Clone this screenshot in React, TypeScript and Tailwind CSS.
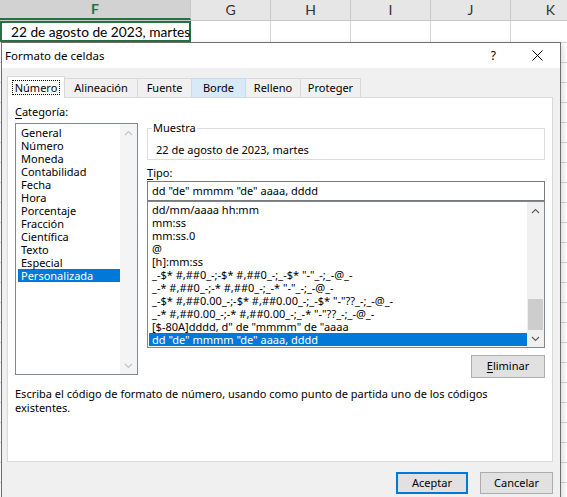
import React from 'react';

const catItems = [
  'General',
  'Número',
  'Moneda',
  'Contabilidad',
  'Fecha',
  'Hora',
  'Porcentaje',
  'Fracción',
  'Científica',
  'Texto',
  'Especial',
  'Personalizada',
];

const tipoItems = [
  'dd/mm/aaaa hh:mm',
  'mm:ss',
  'mm:ss.0',
  '@',
  '[h]:mm:ss',
  '_-$* #,##0_-;-$* #,##0_-;_-$* "-"_-;_-@_-',
  '_-* #,##0_-;-* #,##0_-;_-* "-"_-;_-@_-',
  '_-$* #,##0.00_-;-$* #,##0.00_-;_-$* "-"??_-;_-@_-',
  '_-* #,##0.00_-;-* #,##0.00_-;_-* "-"??_-;_-@_-',
  '[$-80A]dddd, d" de "mmmm" de "aaaa',
  'dd "de" mmmm "de" aaaa, dddd',
];

function Chevron({ up, color }: { up: boolean; color: string }) {
  return (
    <svg width="9" height="6" viewBox="0 0 9 6">
      <path
        d={up ? 'M1 5 L4.5 1.5 L8 5' : 'M1 1 L4.5 4.5 L8 1'}
        fill="none"
        stroke={color}
        strokeWidth="1.2"
      />
    </svg>
  );
}

const cols = ['G', 'H', 'I', 'J', 'K'];

export default function App() {
  return (
    <div className="relative w-[567px] h-[497px] overflow-hidden bg-white font-['Lato',sans-serif]">
      {/* Column headers */}
      <div className="flex h-[21px] bg-[#e6e6e6] border-b border-[#c8c8c8]">
        <div className="w-[191px] shrink-0 bg-[#d2d2d2] border-r border-[#c8c8c8] border-b-2 border-b-[#217346] flex items-center justify-center text-[14px] font-bold text-[#217346] leading-none">
          F
        </div>
        {cols.map((c) => (
          <div
            key={c}
            className="w-[80px] shrink-0 border-r border-[#c8c8c8] flex items-center justify-center text-[14px] text-[#333] leading-none"
          >
            {c}
          </div>
        ))}
        <div className="flex-1" />
      </div>
      {/* Row 1 */}
      <div className="flex h-[22px] border-b border-[#d4d4d4]">
        <div className="w-[191px] shrink-0 border-2 border-[#217346] flex items-end pl-[9px] text-[13.7px] text-black leading-[17px] whitespace-nowrap">
          22 de agosto de 2023, martes
        </div>
        {cols.map((c) => (
          <div key={c} className="w-[80px] shrink-0 border-r border-[#d4d4d4]" />
        ))}
      </div>
      {/* Remaining rows */}
      {Array.from({ length: 23 }).map((_, i) => (
        <div key={i} className="flex h-[20px] border-b border-[#d4d4d4]">
          <div className="w-[191px] shrink-0 border-r border-[#d4d4d4]" />
          {cols.map((c) => (
            <div key={c} className="w-[80px] shrink-0 border-r border-[#d4d4d4]" />
          ))}
        </div>
      ))}

      {/* Dialog */}
      <div className="absolute left-[1px] top-[42px] w-[560px] h-[470px] border border-[#6f6f6f] bg-[#f0f0f0] flex flex-col font-['Noto_Sans',sans-serif] text-[11px] text-black shadow-[2px_2px_6px_rgba(0,0,0,0.15)]">
        {/* Title bar */}
        <div className="h-[25px] bg-white flex items-center pl-[3px] shrink-0">
          <span className="text-[11.5px] leading-none">Formato de celdas</span>
          <span className="ml-auto text-[12px] leading-none mr-[36px]">?</span>
          <svg width="11" height="11" viewBox="0 0 11 11" className="mr-[17px]">
            <path d="M0.5 0.5 L10.5 10.5 M10.5 0.5 L0.5 10.5" stroke="#000" strokeWidth="1" />
          </svg>
        </div>

        <div className="pt-[8px] pl-[5px]">
          {/* Tabs */}
          <div className="flex items-end h-[22px]">
            <div className="relative z-10 w-[58px] h-[22px] bg-white border border-b-0 border-[#d9d9d9] flex items-center justify-center">
              <span className="outline outline-1 outline-dotted outline-black px-[2px] leading-[13px]">
                Número
              </span>
            </div>
            <div className="w-[73px] h-[20px] border border-l-0 border-b-0 border-[#d9d9d9] flex items-center justify-center">
              Alineación
            </div>
            <div className="w-[54px] h-[20px] border border-l-0 border-b-0 border-[#d9d9d9] flex items-center justify-center">
              Fuente
            </div>
            <div className="w-[54px] h-[20px] bg-[#d8e9f8] border border-l-0 border-b-0 border-[#c9dcee] flex items-center justify-center">
              Borde
            </div>
            <div className="w-[55px] h-[20px] border border-l-0 border-b-0 border-[#d9d9d9] flex items-center justify-center">
              Relleno
            </div>
            <div className="w-[60px] h-[20px] border border-l-0 border-b-0 border-[#d9d9d9] flex items-center justify-center">
              Proteger
            </div>
          </div>

          {/* Panel */}
          <div className="relative -mt-px w-[546px] h-[365px] bg-white border border-[#d9d9d9] pl-[7px] pt-[6px]">
            <div className="flex items-start">
              {/* Left column */}
              <div className="w-[123px] shrink-0">
                <div className="h-[16px] leading-[16px]">
                  <span className="underline underline-offset-2">C</span>ategoría:
                </div>
                <div className="mt-[3px] h-[252px] border border-[#828790] flex">
                  <div className="flex-1 pt-[2px]">
                    {catItems.map((it) => (
                      <div
                        key={it}
                        className={`ml-[2px] pl-[3px] h-[13px] leading-[13px] whitespace-nowrap ${
                          it === 'Personalizada' ? 'bg-[#0078d7] text-white' : ''
                        }`}
                      >
                        {it}
                      </div>
                    ))}
                  </div>
                  <div className="w-[17px] bg-[#f4f4f4] flex flex-col justify-between">
                    <div className="h-[17px] flex items-center justify-center">
                      <Chevron up color="#c4c4c4" />
                    </div>
                    <div className="h-[17px] flex items-center justify-center">
                      <Chevron up={false} color="#c4c4c4" />
                    </div>
                  </div>
                </div>
              </div>

              {/* Right column */}
              <div className="ml-[9px] w-[398px] shrink-0 flex flex-col">
                <fieldset className="mt-[17px] border border-[#dcdcdc] pl-[4px] pb-[2px]">
                  <legend className="px-[1px] leading-[14px]">Muestra</legend>
                  <div className="pt-[8px] pl-[4px] leading-[14px]">22 de agosto de 2023, martes</div>
                </fieldset>
                <div className="mt-[6px] leading-[14px] h-[14px]">
                  <span className="underline underline-offset-2">T</span>ipo:
                </div>
                <div className="mt-[1px] h-[20px] border border-[#7a7a7a] pl-[4px] flex items-center whitespace-nowrap">
                  dd "de" mmmm "de" aaaa, dddd
                </div>
                <div className="h-[147px] border border-[#828790] flex">
                  <div className="flex-1 pt-[1px]">
                    {tipoItems.map((it, i) => (
                      <div
                        key={i}
                        className={`ml-[1px] pl-[3px] h-[13px] leading-[13px] whitespace-nowrap ${
                          i === tipoItems.length - 1 ? 'bg-[#0078d7] text-white' : ''
                        }`}
                      >
                        {it}
                      </div>
                    ))}
                  </div>
                  <div className="w-[17px] bg-[#f0f0f0] flex flex-col">
                    <div className="h-[17px] flex items-center justify-center shrink-0">
                      <Chevron up color="#606060" />
                    </div>
                    <div className="flex-1 flex flex-col justify-end">
                      <div className="h-[31px] mx-[1px] bg-[#cdcdcd]" />
                    </div>
                    <div className="h-[17px] flex items-center justify-center shrink-0">
                      <Chevron up={false} color="#606060" />
                    </div>
                  </div>
                </div>
                <div className="mt-[7px] self-end w-[74px] h-[23px] bg-[#e1e1e1] border border-[#adadad] flex items-center justify-center">
                  <span>
                    <span className="underline underline-offset-2">E</span>liminar
                  </span>
                </div>
              </div>
            </div>
            <div className="mt-[9px] leading-[14px] whitespace-nowrap">
              Escriba el código de formato de número, usando como punto de partida uno de los códigos
              <br />
              existentes.
            </div>
          </div>

          {/* Bottom buttons */}
          <div className="mt-[10px] flex justify-end gap-[12px] pr-[7px]">
            <div className="w-[72px] h-[22px] bg-[#e1e1e1] border-2 border-[#0078d7] flex items-center justify-center">
              Aceptar
            </div>
            <div className="w-[73px] h-[22px] bg-[#e1e1e1] border border-[#adadad] flex items-center justify-center">
              Cancelar
            </div>
          </div>
        </div>
      </div>
    </div>
  );
}
